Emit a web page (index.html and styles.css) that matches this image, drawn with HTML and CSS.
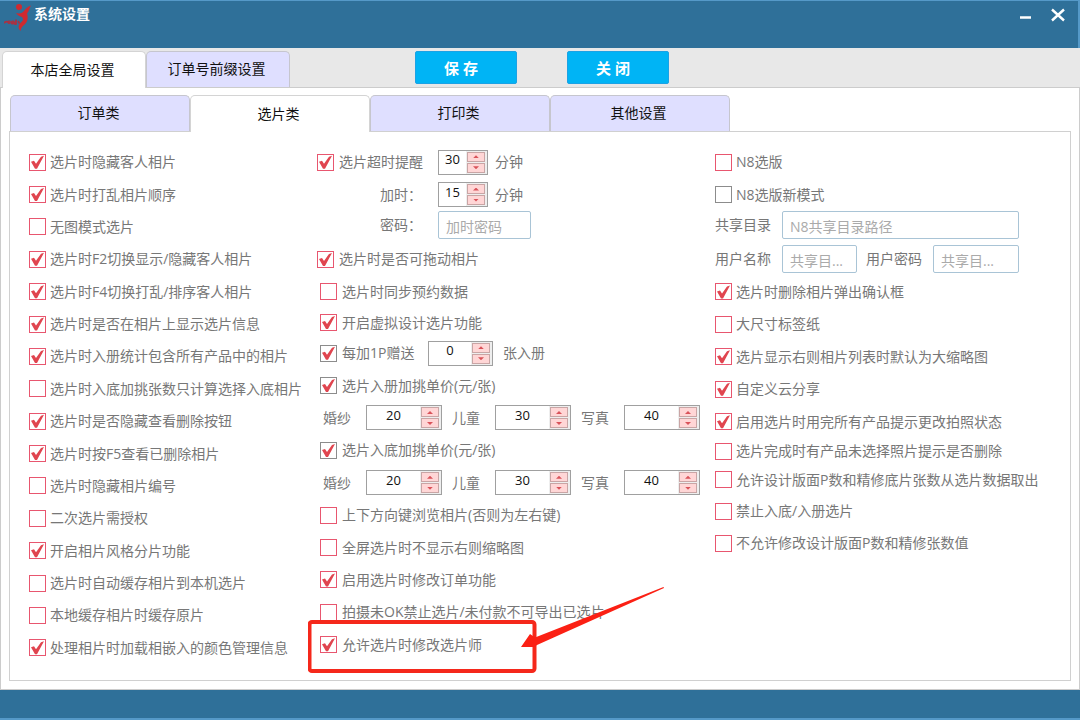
FILE: index.html
```html
<!DOCTYPE html>
<html lang="zh-CN">
<head>
    <meta charset="UTF-8">
    <meta name="viewport" content="width=device-width, initial-scale=1.0">
    <title>系统设置</title>
    <link rel="stylesheet" href="styles.css">
</head>
<body>
    <div class="window">
        <header class="titlebar">
            <svg class="logo" viewBox="0 0 28 28" width="28" height="28" aria-hidden="true">
                <circle cx="15" cy="4" r="3" fill="#cf2a30"/>
                <path d="M12 10c3 1 6 .5 8-2 2-2.500 3.500-4.500 7-5.500-2 2.500-1.500 5.500-4 8 1.500 4.500.5 9-3 11.500-2 1.500-3 3-3.500 6-2.500-3-2.500-6 .5-8.500 2.500-2 2.500-3.500 1-5.500-2-.5-4.500-1.500-6-4z" fill="#cf2a30"/>
                <path d="M0 20c2.500-2 4-1.500 4.500 0M5 17.500v3.500M7.500 18c-1 1.500 0 3 1.500 2.500v-3M12 16.500v4.500c-2 .6-2.500-1.600-.5-2.200M14 18l1.500 2.500" fill="none" stroke="#a83243" stroke-width="1.800"/>
            </svg>
            <h1>系统设置</h1>
            <div class="window-buttons">
                <button type="button" aria-label="最小化">
                    <svg viewBox="0 0 16 16" width="16" height="16"><path d="M2 10.500h11" stroke="#fff" stroke-width="2.500"/></svg>
                </button>
                <button type="button" aria-label="关闭窗口">
                    <svg viewBox="0 0 16 16" width="16" height="16"><path d="M2 2.500l12 11M14 2.500l-12 11" stroke="#fff" stroke-width="2.400"/></svg>
                </button>
            </div>
        </header>

        <div class="toolbar">
            <nav class="main-tabs">
                <button type="button" class="tab active">本店全局设置</button>
                <button type="button" class="tab">订单号前缀设置</button>
            </nav>
            <div class="actions">
                <button type="button" class="action">保 存</button>
                <button type="button" class="action">关 闭</button>
            </div>
        </div>

        <main class="content">
            <nav class="sub-tabs">
                <button type="button" class="tab">订单类</button>
                <button type="button" class="tab active">选片类</button>
                <button type="button" class="tab">打印类</button>
                <button type="button" class="tab">其他设置</button>
            </nav>

            <form class="panel">
                <div class="column column-left">
                    <div class="row"><label class="check"><input type="checkbox" checked>选片时隐藏客人相片</label></div>
                    <div class="row"><label class="check"><input type="checkbox" checked>选片时打乱相片顺序</label></div>
                    <div class="row"><label class="check"><input type="checkbox">无图模式选片</label></div>
                    <div class="row"><label class="check"><input type="checkbox" checked>选片时F2切换显示/隐藏客人相片</label></div>
                    <div class="row"><label class="check"><input type="checkbox" checked>选片时F4切换打乱/排序客人相片</label></div>
                    <div class="row"><label class="check"><input type="checkbox" checked>选片时是否在相片上显示选片信息</label></div>
                    <div class="row"><label class="check"><input type="checkbox" checked>选片时入册统计包含所有产品中的相片</label></div>
                    <div class="row"><label class="check"><input type="checkbox">选片时入底加挑张数只计算选择入底相片</label></div>
                    <div class="row"><label class="check"><input type="checkbox" checked>选片时是否隐藏查看删除按钮</label></div>
                    <div class="row"><label class="check"><input type="checkbox" checked>选片时按F5查看已删除相片</label></div>
                    <div class="row"><label class="check"><input type="checkbox">选片时隐藏相片编号</label></div>
                    <div class="row"><label class="check"><input type="checkbox">二次选片需授权</label></div>
                    <div class="row"><label class="check"><input type="checkbox" checked>开启相片风格分片功能</label></div>
                    <div class="row"><label class="check"><input type="checkbox">选片时自动缓存相片到本机选片</label></div>
                    <div class="row"><label class="check"><input type="checkbox">本地缓存相片时缓存原片</label></div>
                    <div class="row"><label class="check"><input type="checkbox" checked>处理相片时加载相嵌入的颜色管理信息</label></div>
                </div>

                <div class="column column-middle">
                    <div class="row">
                        <label class="check lead"><input type="checkbox" checked>选片超时提醒</label>
                        <span class="number narrow">
                            <input type="number" value="30" aria-label="超时分钟">
                            <span class="spin"><button type="button" class="up" aria-label="增加"></button><button type="button" class="down" aria-label="减少"></button></span>
                        </span>
                        <span class="unit">分钟</span>
                    </div>
                    <div class="row">
                        <label class="lead sub" for="extra-time">加时：</label>
                        <span class="number narrow">
                            <input type="number" id="extra-time" value="15">
                            <span class="spin"><button type="button" class="up" aria-label="增加"></button><button type="button" class="down" aria-label="减少"></button></span>
                        </span>
                        <span class="unit">分钟</span>
                    </div>
                    <div class="row field-row">
                        <label class="lead sub" for="extra-password">密码：</label>
                        <input type="text" class="field field-middle" id="extra-password" placeholder="加时密码">
                    </div>
                    <div class="row"><label class="check"><input type="checkbox" checked>选片时是否可拖动相片</label></div>
                    <div class="row indent"><label class="check"><input type="checkbox">选片时同步预约数据</label></div>
                    <div class="row indent"><label class="check"><input type="checkbox" checked>开启虚拟设计选片功能</label></div>
                    <div class="row indent">
                        <label class="check gift"><input type="checkbox" class="grey" checked>每加1P赠送</label>
                        <span class="number medium">
                            <input type="number" value="0" aria-label="赠送张数">
                            <span class="spin"><button type="button" class="up" aria-label="增加"></button><button type="button" class="down" aria-label="减少"></button></span>
                        </span>
                        <span class="unit wide">张入册</span>
                    </div>
                    <div class="row indent"><label class="check"><input type="checkbox" class="grey" checked>选片入册加挑单价(元/张)</label></div>
                    <div class="row prices">
                        <label for="album-wedding">婚纱</label>
                        <span class="number">
                            <input type="number" id="album-wedding" value="20">
                            <span class="spin"><button type="button" class="up" aria-label="增加"></button><button type="button" class="down" aria-label="减少"></button></span>
                        </span>
                        <label for="album-child">儿童</label>
                        <span class="number">
                            <input type="number" id="album-child" value="30">
                            <span class="spin"><button type="button" class="up" aria-label="增加"></button><button type="button" class="down" aria-label="减少"></button></span>
                        </span>
                        <label for="album-portrait">写真</label>
                        <span class="number">
                            <input type="number" id="album-portrait" value="40">
                            <span class="spin"><button type="button" class="up" aria-label="增加"></button><button type="button" class="down" aria-label="减少"></button></span>
                        </span>
                    </div>
                    <div class="row indent"><label class="check"><input type="checkbox" class="grey" checked>选片入底加挑单价(元/张)</label></div>
                    <div class="row prices">
                        <label for="negative-wedding">婚纱</label>
                        <span class="number">
                            <input type="number" id="negative-wedding" value="20">
                            <span class="spin"><button type="button" class="up" aria-label="增加"></button><button type="button" class="down" aria-label="减少"></button></span>
                        </span>
                        <label for="negative-child">儿童</label>
                        <span class="number">
                            <input type="number" id="negative-child" value="30">
                            <span class="spin"><button type="button" class="up" aria-label="增加"></button><button type="button" class="down" aria-label="减少"></button></span>
                        </span>
                        <label for="negative-portrait">写真</label>
                        <span class="number">
                            <input type="number" id="negative-portrait" value="40">
                            <span class="spin"><button type="button" class="up" aria-label="增加"></button><button type="button" class="down" aria-label="减少"></button></span>
                        </span>
                    </div>
                    <div class="row indent"><label class="check"><input type="checkbox">上下方向键浏览相片(否则为左右键)</label></div>
                    <div class="row indent"><label class="check"><input type="checkbox">全屏选片时不显示右则缩略图</label></div>
                    <div class="row indent"><label class="check"><input type="checkbox" checked>启用选片时修改订单功能</label></div>
                    <div class="row indent"><label class="check"><input type="checkbox">拍摄未OK禁止选片/未付款不可导出已选片</label></div>
                    <div class="row indent marked">
                        <label class="check"><input type="checkbox" checked>允许选片时修改选片师</label>
                        <!-- red frame and arrow over the option -->
                        <svg class="marker" viewBox="0 0 360 92" width="360" height="92" aria-hidden="true">
                            <rect x="1.500" y="37" width="225" height="49" rx="2.500" fill="none" stroke="#f5281b" stroke-width="4"/>
                            <path d="M213 62L222 49L227 52.500L355.500 2L356 3L229 60L226 62z" fill="#fb2014"/>
                        </svg>
                    </div>
                </div>

                <div class="column column-right">
                    <div class="row"><label class="check"><input type="checkbox">N8选版</label></div>
                    <div class="row"><label class="check"><input type="checkbox" class="grey">N8选版新模式</label></div>
                    <div class="row field-row share">
                        <label for="share-path">共享目录</label>
                        <input type="text" class="field field-long" id="share-path" placeholder="N8共享目录路径">
                    </div>
                    <div class="row share">
                        <label for="share-user">用户名称</label>
                        <input type="text" class="field field-user" id="share-user" placeholder="共享目...">
                        <label for="share-password">用户密码</label>
                        <input type="text" class="field field-password" id="share-password" placeholder="共享目...">
                    </div>
                    <div class="row"><label class="check"><input type="checkbox" checked>选片时删除相片弹出确认框</label></div>
                    <div class="row"><label class="check"><input type="checkbox">大尺寸标签纸</label></div>
                    <div class="row"><label class="check"><input type="checkbox" checked>选片显示右则相片列表时默认为大缩略图</label></div>
                    <div class="row"><label class="check"><input type="checkbox" checked>自定义云分享</label></div>
                    <div class="row"><label class="check"><input type="checkbox" checked>启用选片时用完所有产品提示更改拍照状态</label></div>
                    <div class="row"><label class="check"><input type="checkbox">选片完成时有产品未选择照片提示是否删除</label></div>
                    <div class="row"><label class="check"><input type="checkbox">允许设计版面P数和精修底片张数从选片数据取出</label></div>
                    <div class="row"><label class="check"><input type="checkbox">禁止入底/入册选片</label></div>
                    <div class="row"><label class="check"><input type="checkbox">不允许修改设计版面P数和精修张数值</label></div>
                </div>
            </form>
        </main>

        <footer class="statusbar"></footer>
    </div>
</body>
</html>
```

FILE: styles.css
```css
* {
    box-sizing: border-box;
}
body {
    margin: 0;
    font-family: "Open Sans", "Noto Sans CJK SC", sans-serif;
    font-size: 14px;
    line-height: 20px;
    color: #777;
    background-color: #fff;
}
button, input {
    font: inherit;
    margin: 0;
    padding: 0;
}
button {
    border: none;
    background: none;
    cursor: pointer;
}
.window {
    display: flex;
    flex-direction: column;
    min-height: 100vh;
}

/* title bar */
.titlebar {
    display: flex;
    align-items: flex-start;
    height: 48px;
    padding: 2px 12px 0 4px;
    background-color: #2f7099;
    border-top: 1px solid #5599c8;
    border-right: 2px solid #5599c8;
}
.titlebar h1 {
    flex: 1;
    margin: 1px 0 0 2px;
    font-size: 14px;
    line-height: 20px;
    color: #fff;
}
.window-buttons {
    display: flex;
    gap: 16px;
    padding-top: 4px;
}
.window-buttons svg {
    display: block;
}

/* toolbar and tabs */
.toolbar {
    display: flex;
    align-items: flex-start;
    height: 40px;
    padding: 3px 2px 0;
    background-color: #e8e8e8;
    border-bottom: 1px solid #ccc;
}
.main-tabs, .sub-tabs {
    display: flex;
}
.tab {
    height: 36px;
    padding: 0 3px 2px 0;
    color: #111;
    background-color: #dfdfff;
    border: 1px solid #c6c6ce;
    border-bottom: none;
    border-radius: 5px 5px 0 0;
}
.main-tabs .tab {
    width: 144px;
}
.tab.active {
    height: 37px;
    padding-bottom: 0;
    background-color: #fff;
    border-color: #d4d4d4;
}
.actions {
    display: flex;
    gap: 50px;
    margin-left: 125px;
}
.action {
    width: 102px;
    height: 33px;
    padding-right: 10px;
    font-size: 15px;
    font-weight: bold;
    color: #fff;
    background-color: #00b4f5;
    border: 1px solid #1ca2e4;
    border-radius: 2px;
}

/* settings panel */
.content {
    flex: 1;
    display: flex;
    flex-direction: column;
    padding: 7px 8px 8px;
    border: 1px solid #ccc;
    border-top: none;
}
.sub-tabs {
    margin: 0 0 -1px 1px;
    align-items: flex-start;
}
.sub-tabs .tab {
    width: 180px;
}
.sub-tabs .tab.active {
    position: relative;
}
.panel {
    flex: 1;
    display: grid;
    grid-template-columns: 288fr 398fr 345fr;
    padding: 14px 10px 16px 19px;
    border: 1px solid #d0d0d0;
}
.column {
    display: grid;
    min-width: 0;
    white-space: nowrap;
}
.column-left {
    grid-template-rows: repeat(16, 1fr);
}
.column-middle {
    grid-template-rows: repeat(5, 1fr) 29px repeat(10, 1fr);
    padding-bottom: 3px;
}
.column-right {
    grid-template-rows: repeat(9, 1fr) 27px 30px repeat(5, 1fr);
    padding-bottom: 7px;
}
.row {
    display: flex;
    align-items: center;
    min-height: 0;
}
.field-row {
    padding-bottom: 4px;
}
.indent {
    padding-left: 3px;
}
.check {
    display: flex;
    align-items: center;
    gap: 4px;
}
.column-middle .check {
    gap: 5px;
}
.check input {
    flex: none;
    appearance: none;
    width: 17px;
    height: 17px;
    background-color: #fff;
    border: 1px solid #e8566f;
}
.check input.grey {
    border-color: #8c8c8c;
}
.check input:checked::before {
    content: "";
    display: block;
    width: 15px;
    height: 15px;
    background-color: #e0454f;
    clip-path: polygon(1px 7px, 4px 6px, 6px 9px, 11px 2px, 14px 1px, 7px 14px, 5px 14px);
}

/* lines with a number box or a text box */
.lead {
    width: 121px;
}
.sub {
    padding-left: 63px;
}
.gift {
    width: 108px;
}
.unit {
    padding-left: 7px;
}
.unit.wide {
    padding-left: 10px;
}
.number {
    display: flex;
    width: 76px;
    height: 25px;
    background-color: #fff;
    border: 1px solid #a0a0a0;
}
.number.narrow {
    width: 50px;
}
.number.medium {
    width: 65px;
}
.number input {
    flex: 1;
    min-width: 0;
    padding-bottom: 6px;
    font-size: 13px;
    text-align: center;
    color: #111;
    background: none;
    border: none;
    appearance: textfield;
}
.number input::-webkit-inner-spin-button {
    appearance: none;
}
.spin {
    display: flex;
    flex-direction: column;
    gap: 1px;
    padding: 1px 2px 1px 1px;
    background-color: #eee;
}
.spin button {
    display: flex;
    flex: 1;
    align-items: center;
    justify-content: center;
    width: 18px;
    background-color: #ffd6d6;
    border: 1px solid #c9a5a5;
}
.spin button::before {
    content: "";
    width: 6px;
    height: 3px;
    background-color: #d9535a;
}
.spin .up::before {
    clip-path: polygon(50% 0, 100% 100%, 0 100%);
}
.spin .down::before {
    clip-path: polygon(0 0, 100% 0, 50% 100%);
}
.prices {
    padding-left: 6px;
}
.prices label {
    width: 43px;
}
.prices .number {
    margin-right: 10px;
}
.share label {
    width: 67px;
}
.field {
    height: 28px;
    padding: 3px 7px 0;
    color: #555;
    border: 1px solid #a9c4d6;
    border-radius: 2px;
}
.field::placeholder {
    color: #aaa;
}
.field-middle {
    width: 93px;
}
.field-long {
    width: 237px;
}
.field-user {
    width: 75px;
    margin-right: 9px;
}
.field-password {
    width: 86px;
}

.marked {
    position: relative;
}
.marker {
    position: absolute;
    left: -9px;
    top: -44px;
    pointer-events: none;
}

.statusbar {
    height: 30px;
    background-color: #2f7099;
    border-bottom: 2px solid #5599c8;
}
```
